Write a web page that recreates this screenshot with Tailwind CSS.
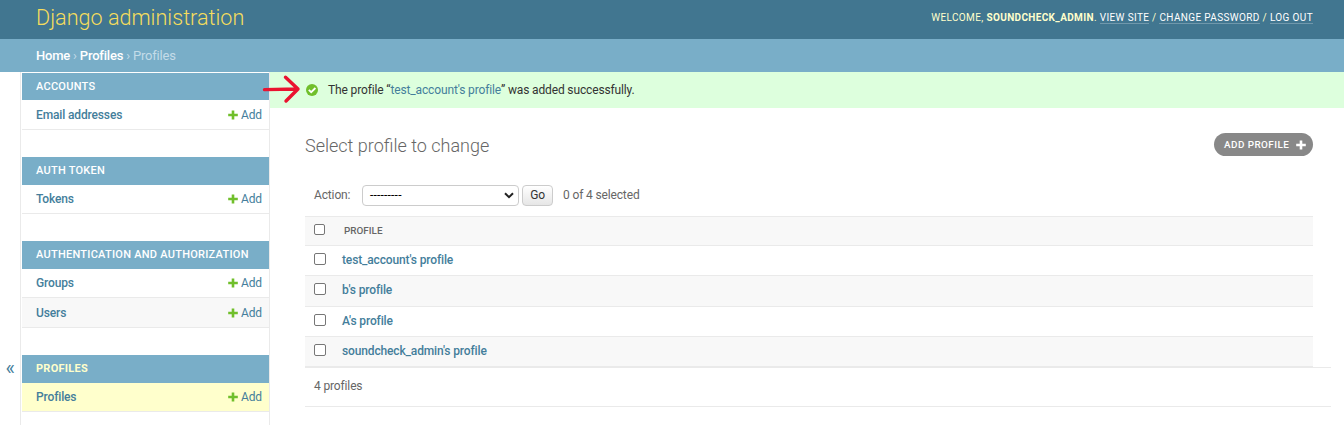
<!DOCTYPE html>
<html lang="en">
<head>
<meta charset="utf-8">
<title>Select profile to change | Django site admin</title>
<script src="https://cdn.jsdelivr.net/npm/@tailwindcss/browser@4"></script>
</head>
<body class="h-[425px] overflow-hidden bg-white font-[Roboto,sans-serif] text-[12px] leading-[16px] tracking-[-0.14px] text-[#333]">
<svg class="hidden">
  <symbol id="plus" viewBox="0 0 10 10"><path d="M3.7 0.4h2.6v3.3h3.5v2.6H6.3v3.3H3.7V6.3H0.2V3.7h3.5z"/></symbol>
</svg>
<header class="flex h-[39px] items-center justify-between bg-[#417690] pr-[31px] pl-9">
  <h1 class="relative -top-[2px] text-[21.6px] leading-[26px] font-light tracking-normal text-[#f5dd5d]">Django administration</h1>
  <div class="relative -top-[2px] text-[10px] leading-[13px] tracking-[0.36px] whitespace-nowrap text-[#ffc]">WELCOME, <strong class="font-bold">SOUNDCHECK_ADMIN</strong>. <a class="border-b border-white/25 text-white">VIEW SITE</a> / <a class="border-b border-white/25 text-white">CHANGE PASSWORD</a> / <a class="border-b border-white/25 text-white">LOG OUT</a></div>
</header>
<nav class="flex h-[33px] items-center bg-[#79aec8] pl-9 text-[13px] tracking-[-0.2px] whitespace-pre text-[#c4dce8]"><span class="font-medium text-white">Home</span> › <span class="font-medium text-white">Profiles</span> › Profiles</nav>
<div class="flex h-[353px]">
  <button class="w-5 pt-[239px] text-center text-[20px] leading-none font-normal text-[#447e9b]">«</button>
  <aside class="w-[250px] shrink-0 border-x border-[#eaeaea] pt-px pl-px font-medium text-[#447e9b]">
    <section class="mb-[27px]">
      <h2 class="flex h-[27px] items-center bg-[#79aec8] px-3.5 text-[11px] tracking-[0.26px] text-white">ACCOUNTS</h2>
      <div class="flex h-[30px] items-center border-b border-[#eaeaea] px-3.5 pr-[7px]"><span class="grow">Email addresses</span><svg class="mr-[3px] size-[10px] fill-[#70bf2b]"><use href="#plus"/></svg><span class="font-normal">Add</span></div>
    </section>
    <section class="mb-[27px]">
      <h2 class="flex h-[28px] items-center bg-[#79aec8] px-3.5 pb-px text-[11px] tracking-[0.26px] text-white">AUTH TOKEN</h2>
      <div class="flex h-[29px] items-center border-b border-[#eaeaea] px-3.5 pr-[7px]"><span class="grow">Tokens</span><svg class="mr-[3px] size-[10px] fill-[#70bf2b]"><use href="#plus"/></svg><span class="font-normal">Add</span></div>
    </section>
    <section class="mb-[27px]">
      <h2 class="flex h-[28px] items-center bg-[#79aec8] px-3.5 pb-px text-[11px] tracking-[0.26px] whitespace-nowrap text-white">AUTHENTICATION AND AUTHORIZATION</h2>
      <div class="flex h-[29px] items-center border-b border-[#eaeaea] px-3.5 pr-[7px]"><span class="grow">Groups</span><svg class="mr-[3px] size-[10px] fill-[#70bf2b]"><use href="#plus"/></svg><span class="font-normal">Add</span></div>
      <div class="flex h-[30px] items-center border-b border-[#eaeaea] bg-[#f8f8f8] px-3.5 pr-[7px]"><span class="grow">Users</span><svg class="mr-[3px] size-[10px] fill-[#70bf2b]"><use href="#plus"/></svg><span class="font-normal">Add</span></div>
    </section>
    <section>
      <h2 class="flex h-[28px] items-center bg-[#79aec8] px-3.5 pb-px text-[11px] font-bold tracking-[0.26px] text-[#ffc]">PROFILES</h2>
      <div class="flex h-[29px] items-center border-b border-[#eaeaea] bg-[#ffc] px-3.5 pr-[7px]"><span class="grow">Profiles</span><svg class="mr-[3px] size-[10px] fill-[#70bf2b]"><use href="#plus"/></svg><span class="font-normal">Add</span></div>
    </section>
  </aside>
  <main class="grow">
    <div class="flex h-9 items-center bg-[#dfd] pl-9">
      <svg class="mr-[10px] size-[12px]" viewBox="0 0 12 12"><circle cx="6" cy="6" r="6" fill="#70bf2b"/><path d="M2.8 5.8L5.2 8.2L9.4 4" fill="none" stroke="#fff" stroke-width="1.8"/></svg>
      <p>The profile “<a class="text-[#447e9b]">test_account's profile</a>” was added successfully.</p>
    </div>
    <div class="flex h-[69px] items-center justify-between pt-[6px] pr-[31px] pl-[35px]">
      <h1 class="pt-px text-[18px] leading-[24px] font-light tracking-normal text-[#666]">Select profile to change</h1>
      <a class="relative -top-[1px] flex h-[23px] w-[99px] items-center justify-between rounded-full bg-[#888] pr-[7px] pl-[10px] text-[9.9px] font-medium tracking-[0.45px] whitespace-nowrap text-white">ADD PROFILE<svg class="size-[10px] fill-white"><use href="#plus"/></svg></a>
    </div>
    <div class="flex h-[39px] items-center pb-[3px] pl-[44px] text-[#666]">
      <span class="w-[48px]">Action:</span>
      <div class="mr-[3px] flex h-[21px] w-[157px] items-center justify-between rounded-[4px] border border-[#ccc] pr-[4px] pl-[7px] text-black"><span class="tracking-[0.2px]">---------</span><svg class="h-[7px] w-[10px]" viewBox="0 0 10 7" fill="none" stroke="#222" stroke-width="2"><path d="M1 1.2L5 5.2L9 1.2"/></svg></div>
      <button class="mr-[10px] h-[21px] w-[31px] rounded-[4px] border border-[#ccc] bg-gradient-to-b from-white to-[#e6e6e6] leading-[18px] text-[#333]">Go</button>
      <span>0 of 4 selected</span>
    </div>
    <div class="mr-[31px] ml-[35px] border-t border-[#eaeaea] font-medium text-[#447e9b]">
      <div class="flex h-[29px] items-center border-b border-[#eaeaea] bg-[#f8f8f8] pl-[9px]"><i class="mr-[19px] mb-[3px] size-[11px] rounded-[2px] border border-[#767676] bg-white"></i><span class="text-[9.9px] tracking-normal text-[#666]">PROFILE</span></div>
      <div class="flex h-[30px] items-center border-b border-[#eaeaea] pb-[2px] pl-[9px]"><i class="mr-4 mb-[2px] size-[12px] rounded-[2px] border border-[#767676] bg-white"></i>test_account's profile</div>
      <div class="flex h-[31px] items-center border-b border-[#eaeaea] bg-[#f8f8f8] pb-[2px] pl-[9px]"><i class="mr-4 mb-[2px] size-[12px] rounded-[2px] border border-[#767676] bg-white"></i>b's profile</div>
      <div class="flex h-[30px] items-center border-b border-[#eaeaea] pb-[2px] pl-[9px]"><i class="mr-4 mb-px size-[12px] rounded-[2px] border border-[#767676] bg-white"></i>A's profile</div>
      <div class="flex h-[30px] items-center border-b border-[#eaeaea] bg-[#f8f8f8] pb-[2px] pl-[9px]"><i class="mr-4 mb-[2px] size-[12px] rounded-[2px] border border-[#767676] bg-white"></i>soundcheck_admin's profile</div>
    </div>
    <p class="mr-[13px] ml-[35px] flex h-10 items-center border-y border-[#eaeaea] pb-[2px] pl-[9px] text-[#666]">4 profiles</p>
  </main>
</div>
<svg class="absolute top-[74px] left-[262px] h-[30px] w-[40px]" viewBox="0 0 40 30" fill="none" stroke="#ea1330" stroke-width="3.4" stroke-linecap="round" stroke-linejoin="round"><path d="M2.5 15.6L36 15M23.5 3.2L36 15L24 27"/></svg>
</body>
</html>
